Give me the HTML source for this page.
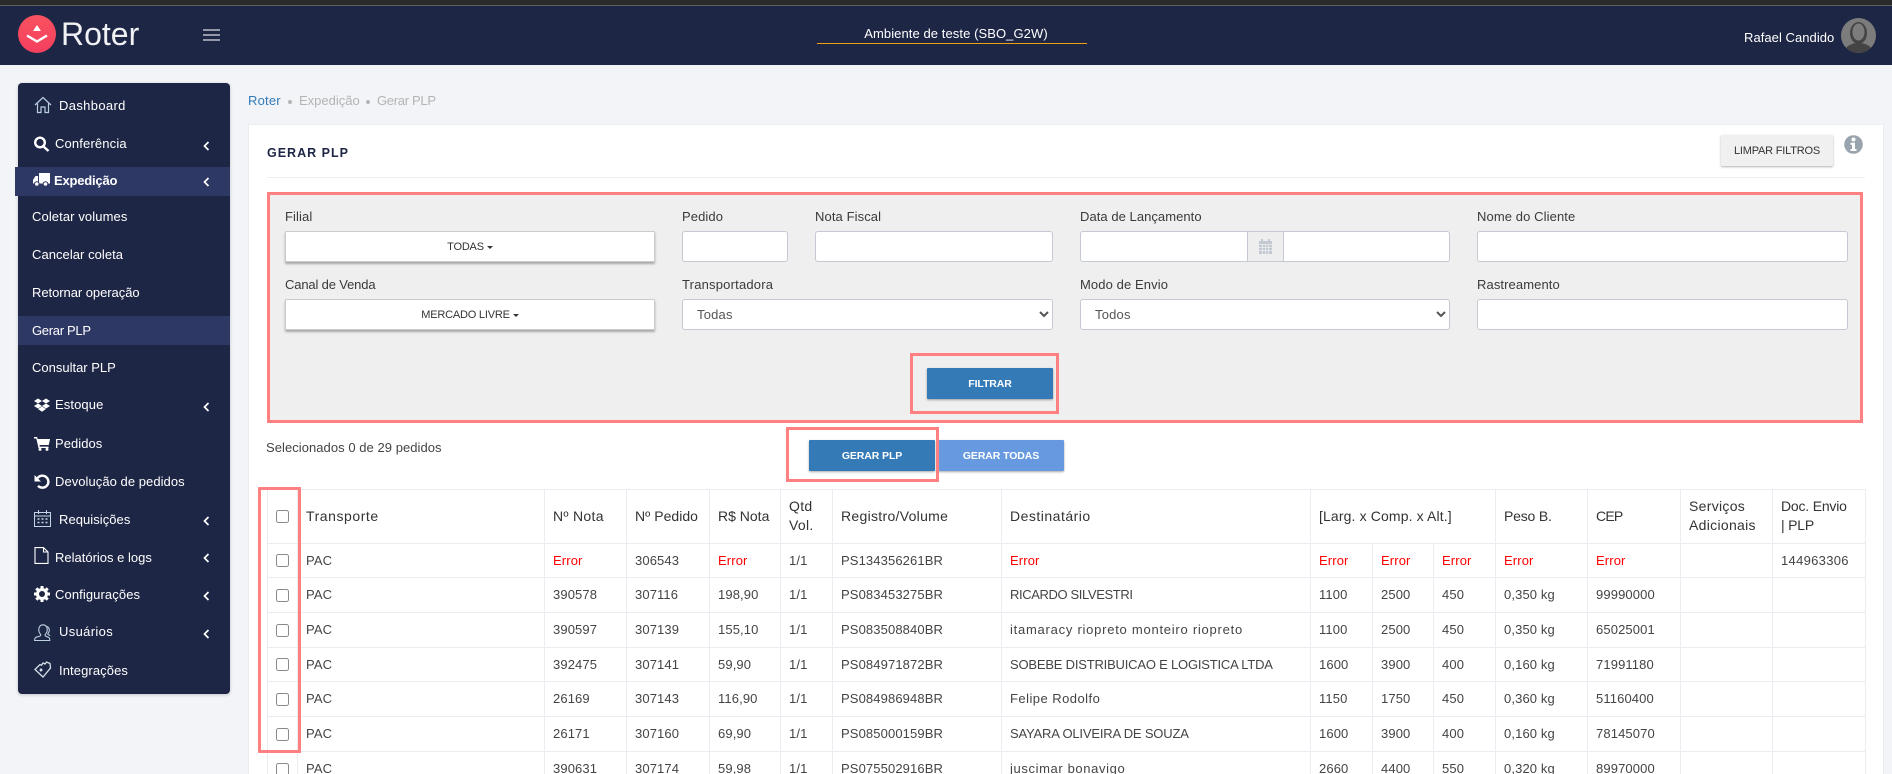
<!DOCTYPE html>
<html lang="pt-BR">
<head>
<meta charset="utf-8">
<title>Gerar PLP</title>
<style>
*{box-sizing:border-box}
html,body{margin:0;padding:0;width:1892px;height:774px;overflow:hidden;background:#f3f4f8;font-family:"Liberation Sans",Arial,sans-serif;color:#333;font-size:13px}
#page{position:relative;width:1892px;height:774px;overflow:hidden}
.a{position:absolute;white-space:nowrap}
.t{line-height:20px;height:20px}
#top{left:0;top:0;width:1892px;height:5px;background:#2b2b2b}
#topl{left:0;top:5px;width:1892px;height:1px;background:#5e5e5e}
#nav{left:0;top:6px;width:1892px;height:59px;background:#1e2645}
#side{left:18px;top:83px;width:212px;height:611px;background:#1e2645;border-radius:4px;box-shadow:0 1px 3px rgba(0,0,0,.2)}
.m{color:#fff;letter-spacing:.05px;font-size:13px}
.act{background:#2e3864}
#card{left:248px;top:124px;width:1636px;height:660px;background:#fff;border:1px solid #ebedf0}
.lab{font-size:13px;color:#3a3a3a;letter-spacing:.1px}
.inp{background:#fff;border:1px solid #c4c9d2;border-radius:3px;height:31px}
.dd{background:#fff;border:1px solid #ccc;box-shadow:0 2px 2px rgba(0,0,0,.3);height:31px;text-align:center;font-size:11px;line-height:31px;color:#333;border-radius:1px;letter-spacing:-.2px}
.car{display:inline-block;width:0;height:0;border-left:3px solid transparent;border-right:3px solid transparent;border-top:3px solid #333;margin-left:3px;vertical-align:middle}
select.inp{appearance:auto;font:13px "Liberation Sans",sans-serif;color:#555;padding:0 0 0 10px;letter-spacing:.2px}
.btn{height:31px;text-align:center;line-height:33px;font-size:10.5px;font-weight:bold;color:#fff;border-radius:1px;box-shadow:0 1px 2px rgba(0,0,0,.35);letter-spacing:-.1px}
.red{border:3px solid #ff8080;background:transparent}
table{position:absolute;left:267px;top:489px;width:1599px;border-collapse:separate;border-spacing:0;table-layout:fixed;font-size:13px;color:#444;letter-spacing:.12px;border-left:1px solid #e9ecf0;border-top:1px solid #e9ecf0}
td,th{border-right:1px solid #e9ecf0;border-bottom:1px solid #e9ecf0;padding:0 0 1px 8px;text-align:left;white-space:nowrap;overflow:hidden;line-height:19px}
th{font-weight:normal;font-size:14px;color:#333;letter-spacing:.3px;white-space:normal}
td.c,th.c{padding:0;text-align:center}
.e{color:#f00}
.cb{display:inline-block;width:13px;height:13px;border:1px solid #8a8a8a;border-radius:2.5px;background:#fff;vertical-align:middle;position:relative;top:-1px}
</style>
</head>
<body>
<div id="page">
<div class="a" id="top"></div><div class="a" id="topl"></div>
<div class="a" id="nav"></div>

<svg class="a" style="left:17px;top:14px" width="40" height="40" viewBox="0 0 40 40">
<defs><linearGradient id="g" x1="0" y1="0" x2="0" y2="1"><stop offset="0" stop-color="#f9525f"/><stop offset="1" stop-color="#f43f5f"/></linearGradient></defs>
<circle cx="20" cy="20" r="19" fill="url(#g)"/>
<path d="M16 17l4-6 4 6z" fill="#fff"/>
<path d="M10 21.5l10 6 10-6" fill="none" stroke="#fff" stroke-width="2.4"/>
</svg>
<div class="a" style="left:61px;top:15px;font-size:32px;line-height:38px;color:#f0f1f3">Roter</div>
<svg class="a" style="left:203px;top:28px" width="18" height="14"><path d="M0 2h17M0 7h17M0 12h17" stroke="#a6a9b6" stroke-width="1.7"/></svg>

<div class="a t" style="left:766px;width:380px;top:24px;text-align:center;color:#fff;letter-spacing:.08px">Ambiente de teste (SBO_G2W)</div>
<div class="a" style="left:817px;top:43px;width:270px;height:1px;background:#f0a010"></div>
<div class="a t" style="left:1744px;top:28px;color:#fff;font-size:13px;letter-spacing:.05px">Rafael Candido</div>
<svg class="a" style="left:1841px;top:18px" width="35" height="35" viewBox="0 0 35 35">
<defs><clipPath id="c"><circle cx="17.5" cy="17.5" r="17.5"/></clipPath></defs>
<g clip-path="url(#c)"><rect width="35" height="35" fill="#7c7c7c"/><ellipse cx="17.5" cy="15" rx="8.5" ry="11" fill="#444"/><ellipse cx="17.5" cy="14" rx="6" ry="8.5" fill="#7c7c7c"/><ellipse cx="17.5" cy="34" rx="14" ry="9" fill="#444"/></g>
</svg>

<!-- SIDEBAR -->
<div class="a" id="side"></div>
<div class="a act" style="left:15px;top:167px;width:215px;height:29px"></div>
<div class="a act" style="left:18px;top:316px;width:212px;height:29px"></div>

<svg class="a" style="left:34px;top:96px" width="18" height="18" viewBox="0 0 18 18" fill="none" stroke="#b9cfe0" stroke-width="1.2"><path d="M1 9L9 1.5 17 9M3.5 7.5V16.5H7V11H11V16.5H14.5V7.5"/></svg>
<div class="a t m" style="left:59px;top:96px;letter-spacing:.35px">Dashboard</div>

<svg class="a" style="left:33px;top:136px" width="17" height="16" viewBox="0 0 17 16" fill="none" stroke="#fff" stroke-width="2.4"><circle cx="7" cy="6.5" r="4.8"/><path d="M10.5 10.5L15.5 15"/></svg>
<div class="a t m" style="left:55px;top:134px;letter-spacing:.15px">Conferência</div>

<svg class="a" style="left:33px;top:173px" width="17" height="14" viewBox="0 0 17 14" fill="#fff"><path d="M6 0h11v10.5H6zM5 3v7.5H0V7l2.5-4z"/><circle cx="3.8" cy="11" r="2.3" stroke="#2e3864"/><circle cx="12.5" cy="11" r="2.3" stroke="#2e3864"/></svg>
<div class="a t m" style="left:54px;top:171px;font-weight:bold;letter-spacing:-.2px">Expedição</div>

<div class="a t m" style="left:32px;top:207px;letter-spacing:.1px">Coletar volumes</div>
<div class="a t m" style="left:32px;top:245px">Cancelar coleta</div>
<div class="a t m" style="left:32px;top:283px;letter-spacing:-.05px">Retornar operação</div>
<div class="a t m" style="left:32px;top:321px;letter-spacing:-.3px">Gerar PLP</div>
<div class="a t m" style="left:32px;top:358px;letter-spacing:0">Consultar PLP</div>

<svg class="a" style="left:34px;top:398px" width="16" height="14" viewBox="0 0 16 14" fill="#fff"><path d="M4 .5L8 3 4 5.5 0 3zM12 .5L16 3l-4 2.500L8 3zM4 5.500L8 8 4 10.500 0 8zM12 5.500L16 8l-4 2.500L8 8zM4 11l4-2.500 4 2.500-4 2.800z"/></svg>
<div class="a t m" style="left:55px;top:395px;letter-spacing:.1px">Estoque</div>

<svg class="a" style="left:34px;top:436px" width="16" height="15" viewBox="0 0 16 15" fill="#fff"><path d="M0 1h3l.8 2H16l-1.200 6H5.500l.3 1.600h8.700V12H4.500L2.300 2.500H0z"/><circle cx="6" cy="13.400" r="1.500"/><circle cx="13" cy="13.400" r="1.500"/></svg>
<div class="a t m" style="left:55px;top:434px">Pedidos</div>

<svg class="a" style="left:34px;top:474px" width="16" height="15" viewBox="0 0 16 15" fill="none"><path d="M3.500 4.200A6 6 0 1 1 4 11.800" stroke="#fff" stroke-width="2.400"/><path d="M.5 1v6.500H7z" fill="#fff"/></svg>
<div class="a t m" style="left:55px;top:472px">Devolução de pedidos</div>

<svg class="a" style="left:34px;top:510px" width="18" height="17" viewBox="0 0 18 17" fill="none" stroke="#c3d6e3" stroke-width="1"><rect x=".5" y="2.500" width="16" height="14"/><path d="M.5 6h16M4.500 0v4M12.500 0v4"/><path d="M3.500 9h2M7.500 9h2M11.500 9h2M3.500 12.500h2M7.500 12.500h2M11.500 12.500h2" stroke-width="1.600"/></svg>
<div class="a t m" style="left:59px;top:510px">Requisições</div>

<svg class="a" style="left:34px;top:547px" width="15" height="17" viewBox="0 0 15 17" fill="none" stroke="#fff" stroke-width="1.100"><path d="M1 .6h8.500L14 5v11.400H1zM9.500.6V5H14"/></svg>
<div class="a t m" style="left:55px;top:548px;letter-spacing:0">Relatórios e logs</div>

<svg class="a" style="left:34px;top:586px" width="16" height="16" viewBox="0 0 16 16"><circle cx="8" cy="8" r="4.500" fill="none" stroke="#fff" stroke-width="3"/><path d="M8 0v16M0 8h16M2.300 2.300l11.400 11.400M13.700 2.300L2.300 13.700" stroke="#fff" stroke-width="3" stroke-dasharray="2.600 10.800 2.600 0"/></svg>
<div class="a t m" style="left:55px;top:585px;letter-spacing:.1px">Configurações</div>

<svg class="a" style="left:34px;top:624px" width="18" height="17" viewBox="0 0 18 17" fill="none" stroke="#bcd0df" stroke-width="1.100"><path d="M5 7.500C4 3 6.500 .8 9 .8s5 2 4 6.700c-.4 1.600-1.600 2.700-2 3.500-.2 1.300 2 1.600 3.500 2.300 1 .4 1.200 1.300 1.300 3.200H.6c.1-2 .3-2.800 1.400-3.200 1.500-.6 5-1 4.800-2.300C6.400 10 5.400 9 5 7.500z"/><path d="M12.500 2.500c2.500.3 3.200 3 2.600 5-.3 1-1 1.700-1.300 2.500 0 .8 1.500 1 2.500 1.500"/></svg>
<div class="a t m" style="left:59px;top:622px;letter-spacing:.35px">Usuários</div>

<svg class="a" style="left:34px;top:661px" width="18" height="17" viewBox="0 0 18 17" fill="none" stroke="#d5e0e8" stroke-width="1.300"><path d="M1 8.500L6 3.500l1.500.8L9 2l2 1 1.500-2 3.500 1.500L16.500 7 9 16z"/><circle cx="7" cy="9" r=".8"/></svg>
<div class="a t m" style="left:59px;top:661px;letter-spacing:.1px">Integrações</div>

<svg class="a" style="left:203px;top:141px" width="7" height="10" viewBox="0 0 7 10"><path d="M5.500 1L1.500 5l4 4" fill="none" stroke="#fff" stroke-width="1.700"/></svg>
<svg class="a" style="left:203px;top:177px" width="7" height="10" viewBox="0 0 7 10"><path d="M5.500 1L1.500 5l4 4" fill="none" stroke="#fff" stroke-width="1.700"/></svg>
<svg class="a" style="left:203px;top:402px" width="7" height="10" viewBox="0 0 7 10"><path d="M5.500 1L1.500 5l4 4" fill="none" stroke="#fff" stroke-width="1.700"/></svg>
<svg class="a" style="left:203px;top:516px" width="7" height="10" viewBox="0 0 7 10"><path d="M5.500 1L1.500 5l4 4" fill="none" stroke="#fff" stroke-width="1.700"/></svg>
<svg class="a" style="left:203px;top:553px" width="7" height="10" viewBox="0 0 7 10"><path d="M5.500 1L1.500 5l4 4" fill="none" stroke="#fff" stroke-width="1.700"/></svg>
<svg class="a" style="left:203px;top:591px" width="7" height="10" viewBox="0 0 7 10"><path d="M5.500 1L1.500 5l4 4" fill="none" stroke="#fff" stroke-width="1.700"/></svg>
<svg class="a" style="left:203px;top:629px" width="7" height="10" viewBox="0 0 7 10"><path d="M5.500 1L1.500 5l4 4" fill="none" stroke="#fff" stroke-width="1.700"/></svg>

<!-- BREADCRUMB -->
<div class="a t" style="left:248px;top:91px;color:#337ab7;letter-spacing:.2px">Roter</div>
<div class="a" style="left:288px;top:100px;width:4px;height:4px;border-radius:50%;background:#b5b5b5"></div>
<div class="a t" style="left:299px;top:91px;color:#b4b4b4;letter-spacing:0">Expedição</div>
<div class="a" style="left:366px;top:100px;width:4px;height:4px;border-radius:50%;background:#b5b5b5"></div>
<div class="a t" style="left:377px;top:91px;color:#b4b4b4;letter-spacing:-.3px">Gerar PLP</div>

<!-- CARD -->
<div class="a" id="card"></div>
<div class="a t" style="left:267px;top:143px;font-weight:bold;font-size:12.5px;letter-spacing:1px;color:#1e2645">GERAR PLP</div>
<div class="a" style="left:267px;top:177px;width:1598px;height:1px;background:#eceef0"></div>
<div class="a" style="left:1721px;top:135px;width:112px;height:31px;background:#f0f0f0;box-shadow:0 1px 2px rgba(0,0,0,.3);border-radius:1px;text-align:center;font-size:11px;line-height:33px;color:#333;letter-spacing:-.2px">LIMPAR FILTROS</div>
<svg class="a" style="left:1844px;top:135px" width="19" height="19" viewBox="0 0 19 19"><circle cx="9.5" cy="9.5" r="9.3" fill="#9aa4ae"/><circle cx="9.5" cy="4.5" r="2" fill="#fff"/><path d="M6.5 7.700h4.500v6.300h1.500v2h-6v-2H8v-4.300H6.500z" fill="#fff"/></svg>

<!-- FILTER PANEL -->
<div class="a" style="left:267px;top:192px;width:1596px;height:231px;background:#efefef;border:3px solid #ff8080"></div>

<div class="a t lab" style="left:285px;top:207px">Filial</div>
<div class="a t lab" style="left:682px;top:207px">Pedido</div>
<div class="a t lab" style="left:815px;top:207px">Nota Fiscal</div>
<div class="a t lab" style="left:1080px;top:207px;letter-spacing:.05px">Data de Lançamento</div>
<div class="a t lab" style="left:1477px;top:207px">Nome do Cliente</div>

<div class="a dd" style="left:285px;top:231px;width:370px">TODAS<span class="car"></span></div>
<div class="a inp" style="left:682px;top:231px;width:106px"></div>
<div class="a inp" style="left:815px;top:231px;width:238px"></div>
<div class="a inp" style="left:1080px;top:231px;width:370px"></div>
<div class="a" style="left:1247px;top:231px;width:37px;height:31px;background:#eee;border:1px solid #c4c9d2"></div>
<svg class="a" style="left:1259px;top:239px" width="13" height="15" viewBox="0 0 13 15"><rect y="2" width="13" height="13" fill="#c3c9d2"/><path d="M3 0v3M10 0v3" stroke="#c3c9d2" stroke-width="2"/><path d="M0 5.500h13M0 8.500h13M0 11.500h13M3.500 5v10M6.500 5v10M9.500 5v10" stroke="#eee" stroke-width=".8"/></svg>
<div class="a inp" style="left:1477px;top:231px;width:371px"></div>

<div class="a t lab" style="left:285px;top:275px;letter-spacing:-.15px">Canal de Venda</div>
<div class="a t lab" style="left:682px;top:275px;letter-spacing:.2px">Transportadora</div>
<div class="a t lab" style="left:1080px;top:275px">Modo de Envio</div>
<div class="a t lab" style="left:1477px;top:275px">Rastreamento</div>

<div class="a dd" style="left:285px;top:299px;width:370px">MERCADO LIVRE<span class="car"></span></div>
<select class="a inp" style="left:682px;top:299px;width:371px"><option>Todas</option></select>
<select class="a inp" style="left:1080px;top:299px;width:370px"><option>Todos</option></select>
<div class="a inp" style="left:1477px;top:299px;width:371px"></div>

<div class="a btn" style="left:927px;top:368px;width:126px;background:#337ab7">FILTRAR</div>
<div class="a red" style="left:910px;top:353px;width:149px;height:61px"></div>

<div class="a t" style="left:266px;top:438px;color:#444;letter-spacing:.05px">Selecionados 0 de 29 pedidos</div>
<div class="a btn" style="left:809px;top:440px;width:126px;background:#337ab7">GERAR PLP</div>
<div class="a btn" style="left:938px;top:440px;width:126px;background:#6699e0">GERAR TODAS</div>
<div class="a red" style="left:786px;top:427px;width:153px;height:55px"></div>

<!-- TABLE -->
<table>
<colgroup>
<col style="width:30px"><col style="width:247px"><col style="width:82px"><col style="width:83px"><col style="width:71px"><col style="width:52px"><col style="width:169px"><col style="width:309px"><col style="width:62px"><col style="width:61px"><col style="width:62px"><col style="width:92px"><col style="width:93px"><col style="width:92px"><col style="width:93px">
</colgroup>
<tr style="height:54px"><th class="c"><span class="cb"></span></th><th style="letter-spacing:.55px">Transporte</th><th>Nº Nota</th><th style="letter-spacing:.03px">Nº Pedido</th><th style="letter-spacing:0">R$ Nota</th><th>Qtd Vol.</th><th>Registro/Volume</th><th style="letter-spacing:.5px">Destinatário</th><th colspan="3" style="letter-spacing:.13px">[Larg. x Comp. x Alt.]</th><th style="letter-spacing:-.2px">Peso B.</th><th style="letter-spacing:-.8px">CEP</th><th>Serviços Adicionais</th><th style="letter-spacing:-.2px">Doc. Envio<br>| PLP</th></tr>
<tr style="height:34px"><td class="c"><span class="cb"></span></td><td>PAC</td><td class="e">Error</td><td>306543</td><td class="e">Error</td><td>1/1</td><td>PS134356261BR</td><td class="e">Error</td><td class="e">Error</td><td class="e">Error</td><td class="e">Error</td><td class="e">Error</td><td class="e">Error</td><td></td><td style="letter-spacing:.3px">144963306</td></tr>
<tr style="height:35px"><td class="c"><span class="cb"></span></td><td>PAC</td><td>390578</td><td>307116</td><td>198,90</td><td>1/1</td><td>PS083453275BR</td><td style="letter-spacing:-.38px">RICARDO SILVESTRI</td><td>1100</td><td>2500</td><td>450</td><td>0,350 kg</td><td>99990000</td><td></td><td></td></tr>
<tr style="height:35px"><td class="c"><span class="cb"></span></td><td>PAC</td><td>390597</td><td>307139</td><td>155,10</td><td>1/1</td><td>PS083508840BR</td><td style="letter-spacing:.75px">itamaracy riopreto monteiro riopreto</td><td>1100</td><td>2500</td><td>450</td><td>0,350 kg</td><td>65025001</td><td></td><td></td></tr>
<tr style="height:34px"><td class="c"><span class="cb"></span></td><td>PAC</td><td>392475</td><td>307141</td><td>59,90</td><td>1/1</td><td>PS084971872BR</td><td style="letter-spacing:-.2px">SOBEBE DISTRIBUICAO E LOGISTICA LTDA</td><td>1600</td><td>3900</td><td>400</td><td>0,160 kg</td><td>71991180</td><td></td><td></td></tr>
<tr style="height:35px"><td class="c"><span class="cb"></span></td><td>PAC</td><td>26169</td><td>307143</td><td>116,90</td><td>1/1</td><td>PS084986948BR</td><td style="letter-spacing:.46px">Felipe Rodolfo</td><td>1150</td><td>1750</td><td>450</td><td>0,360 kg</td><td>51160400</td><td></td><td></td></tr>
<tr style="height:35px"><td class="c"><span class="cb"></span></td><td>PAC</td><td>26171</td><td>307160</td><td>69,90</td><td>1/1</td><td>PS085000159BR</td><td style="letter-spacing:-.18px">SAYARA OLIVEIRA DE SOUZA</td><td>1600</td><td>3900</td><td>400</td><td>0,160 kg</td><td>78145070</td><td></td><td></td></tr>
<tr style="height:35px"><td class="c"><span class="cb"></span></td><td>PAC</td><td>390631</td><td>307174</td><td>59,98</td><td>1/1</td><td>PS075502916BR</td><td style="letter-spacing:.62px">juscimar bonavigo</td><td>2660</td><td>4400</td><td>550</td><td>0,320 kg</td><td>89970000</td><td></td><td></td></tr>
</table>
<div class="a red" style="left:258px;top:487px;width:43px;height:266px"></div>
</div>
</body>
</html>
